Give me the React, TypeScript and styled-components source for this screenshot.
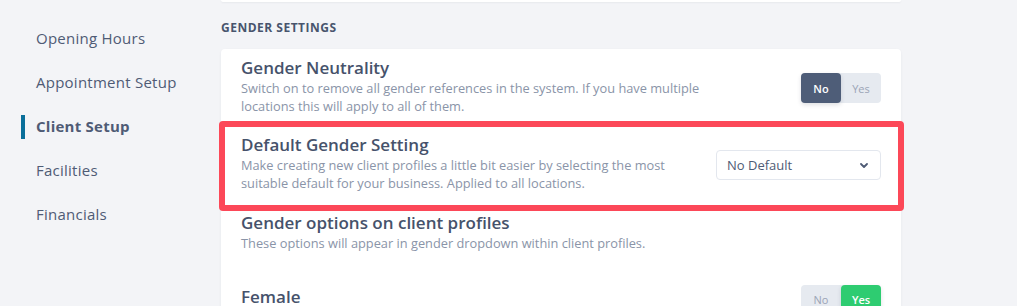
import React from "react";
import styled, { createGlobalStyle } from "styled-components";

const Global = createGlobalStyle`
  html, body { margin: 0; padding: 0; background: #f3f4f7; }
  body { font-family: "Open Sans", "Noto Sans", sans-serif; color: #48546d; }
  * { box-sizing: border-box; }
`;

const Page = styled.div`
  display: flex;
  width: 1017px;
  height: 306px;
  overflow: hidden;
`;

const Sidebar = styled.nav`
  width: 221px;
  flex-shrink: 0;
  display: flex;
  flex-direction: column;
  padding-top: 16px;
`;

const NavItem = styled.div<{ $active?: boolean }>`
  position: relative;
  height: 44px;
  flex-shrink: 0;
  display: flex;
  align-items: center;
  padding-left: 36px;
  font-size: 15px;
  letter-spacing: 0.25px;
  font-weight: ${(p) => (p.$active ? 700 : 400)};
  color: #4f5b75;
  &::before {
    content: "";
    display: ${(p) => (p.$active ? "block" : "none")};
    position: absolute;
    left: 21px;
    top: 11px;
    width: 4px;
    height: 24px;
    background: #0a6f9a;
  }
`;

const Main = styled.main`
  width: 680px;
  display: flex;
  flex-direction: column;
`;

const TopCardEdge = styled.div`
  height: 2px;
  flex-shrink: 0;
  background: #fff;
  border-radius: 0 0 4px 4px;
  box-shadow: 0 1px 2px rgba(40, 50, 70, 0.06);
`;

const SectionHeading = styled.h3`
  margin: 0;
  padding: 18px 0 0;
  height: 47px;
  flex-shrink: 0;
  font-size: 12px;
  line-height: 16px;
  font-weight: 700;
  letter-spacing: 0.5px;
  text-transform: uppercase;
  color: #48546d;
`;

const Card = styled.section`
  background: #fff;
  border-radius: 4px 4px 0 0;
  box-shadow: 0 1px 3px rgba(40, 50, 70, 0.06);
  display: flex;
  flex-direction: column;
  flex: 1 0 auto;
`;

const Row = styled.div<{ $highlight?: boolean; $pt: number; $pb: number }>`
  display: flex;
  flex-shrink: 0;
  align-items: center;
  justify-content: space-between;
  padding: ${(p) => `${p.$pt}px 20px ${p.$pb}px 20px`};
  ${(p) =>
    p.$highlight &&
    `
    margin: 0 -3px 0 -2px;
    border: 6px solid #fc4858;
    border-radius: 4px;
    padding-left: 16px;
    padding-right: 17px;
  `}
`;

const TextBlock = styled.div`
  display: flex;
  flex-direction: column;
`;

const Title = styled.div`
  font-size: 17px;
  line-height: 22px;
  font-weight: 600;
  color: #46526b;
  margin-bottom: 1px;
`;

const Desc = styled.div`
  font-size: 12.8px;
  line-height: 17.5px;
  color: #8a94a8;
`;

const Toggle = styled.div`
  display: flex;
  width: 80px;
  height: 30px;
  border-radius: 4px;
  background: #e6eaf0;
  margin-top: 4px;
`;

const ToggleOption = styled.div<{ $on?: boolean; $color?: string }>`
  flex: 1;
  display: flex;
  align-items: center;
  justify-content: center;
  font-size: 11px;
  font-weight: ${(p) => (p.$on ? 600 : 400)};
  border-radius: 4px;
  color: ${(p) => (p.$on ? "#fff" : "#9ba4b6")};
  background: ${(p) => (p.$on ? p.$color : "transparent")};
  box-shadow: ${(p) => (p.$on ? "0 2px 4px rgba(40,50,70,0.15)" : "none")};
`;

const Select = styled.div`
  width: 165px;
  height: 30px;
  border: 1px solid #e3e7ee;
  border-radius: 4px;
  display: flex;
  align-items: center;
  justify-content: space-between;
  padding: 0 12px 0 10px;
  font-size: 13px;
  color: #4f5b75;
  margin-top: 4px;
`;

const Chevron = () => (
  <svg width="8" height="5" viewBox="0 0 8 5">
    <path d="M1 1 L4 4 L7 1" fill="none" stroke="#4f5b75" strokeWidth="1.8" strokeLinecap="round" strokeLinejoin="round" />
  </svg>
);

export default function App() {
  return (
    <>
      <Global />
      <Page>
        <Sidebar>
          <NavItem>Opening Hours</NavItem>
          <NavItem>Appointment Setup</NavItem>
          <NavItem $active>Client Setup</NavItem>
          <NavItem>Facilities</NavItem>
          <NavItem>Financials</NavItem>
        </Sidebar>
        <Main>
          <TopCardEdge />
          <SectionHeading>Gender Settings</SectionHeading>
          <Card>
            <Row $pt={8} $pb={6}>
              <TextBlock>
                <Title>Gender Neutrality</Title>
                <Desc>
                  Switch on to remove all gender references in the system. If you have multiple
                  <br />
                  locations this will apply to all of them.
                </Desc>
              </TextBlock>
              <Toggle>
                <ToggleOption $on $color="#4e5d78">No</ToggleOption>
                <ToggleOption>Yes</ToggleOption>
              </Toggle>
            </Row>
            <Row $highlight $pt={7} $pb={13}>
              <TextBlock>
                <Title>Default Gender Setting</Title>
                <Desc>
                  Make creating new client profiles a little bit easier by selecting the most
                  <br />
                  suitable default for your business. Applied to all locations.
                </Desc>
              </TextBlock>
              <Select>
                No Default
                <Chevron />
              </Select>
            </Row>
            <Row $pt={1} $pb={28}>
              <TextBlock>
                <Title>Gender options on client profiles</Title>
                <Desc>These options will appear in gender dropdown within client profiles.</Desc>
              </TextBlock>
            </Row>
            <Row $pt={0} $pb={0}>
              <TextBlock>
                <Title>Female</Title>
              </TextBlock>
              <Toggle>
                <ToggleOption>No</ToggleOption>
                <ToggleOption $on $color="#2ecc71">Yes</ToggleOption>
              </Toggle>
            </Row>
          </Card>
        </Main>
      </Page>
    </>
  );
}
